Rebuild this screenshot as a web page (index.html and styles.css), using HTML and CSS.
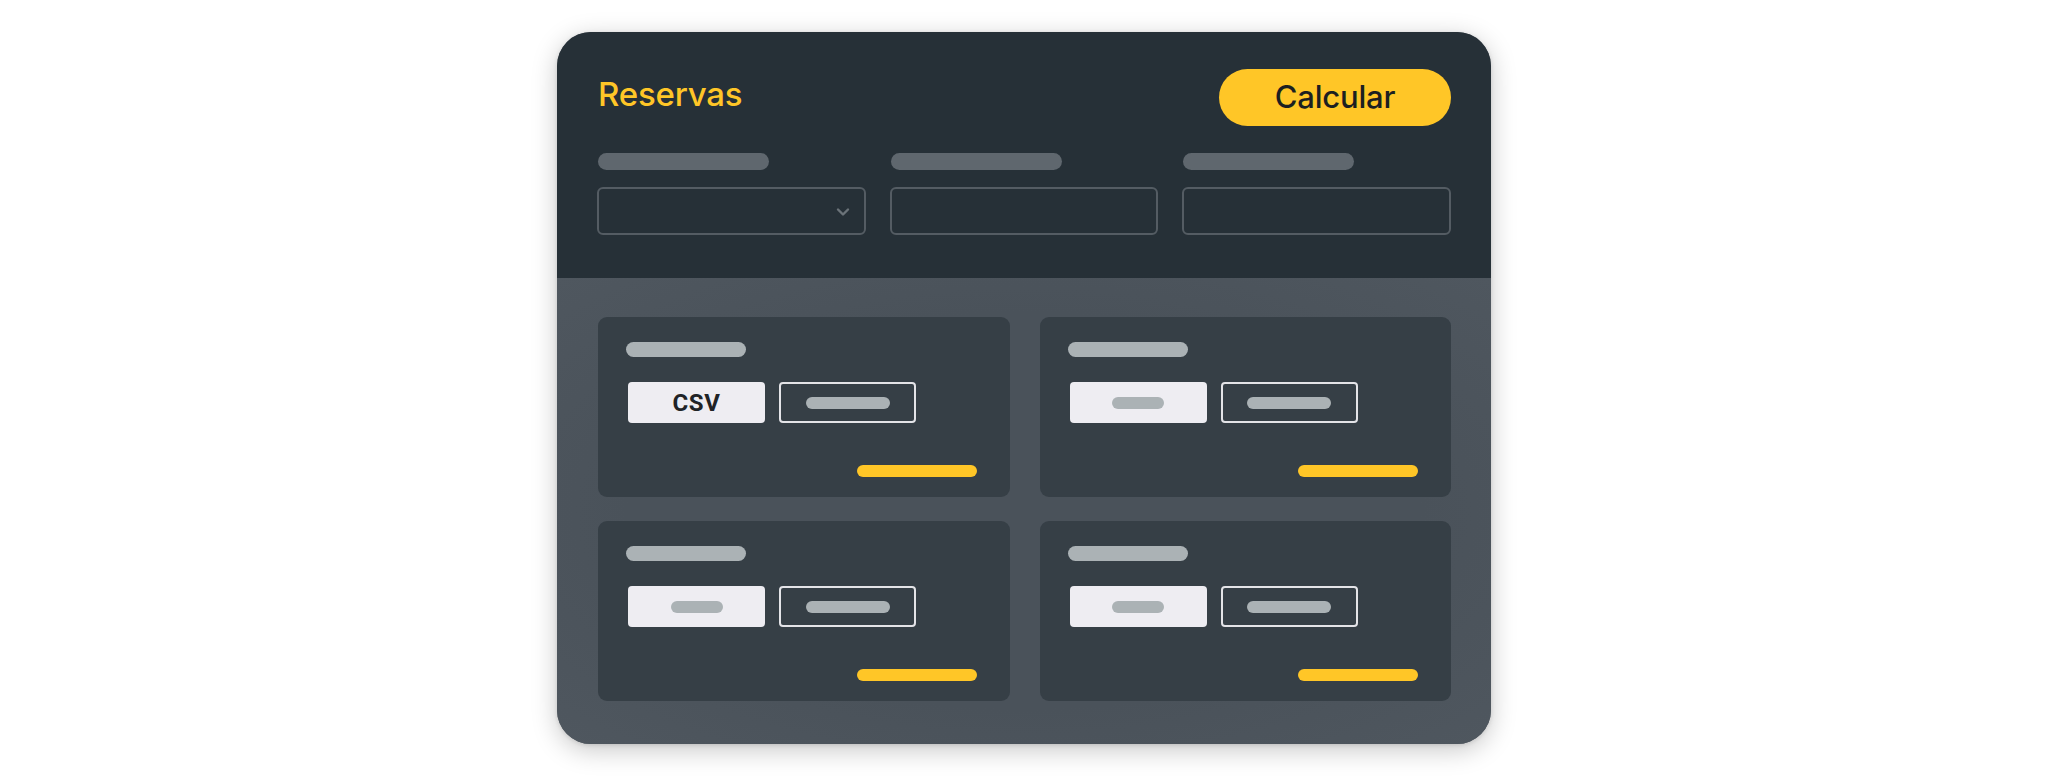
FILE: index.html
```html
<!DOCTYPE html>
<html lang="es">
<head>
<meta charset="utf-8">
<title>Reservas</title>
<link rel="stylesheet" href="styles.css">
</head>
<body>
<main class="stage">
  <section class="panel">
    <header class="panel-head">
      <div class="head-row">
        <h1 class="title">Reservas</h1>
        <button class="btn-calc" type="button">Calcular</button>
      </div>
      <div class="fields">
        <div class="field">
          <span class="label-pill"></span>
          <div class="input select">
            <svg class="chev" width="14" height="10" viewBox="0 0 14 10"><path d="M2 2.5 L7 7.5 L12 2.5" fill="none" stroke="#6b7379" stroke-width="2.4" stroke-linecap="round" stroke-linejoin="round"/></svg>
          </div>
        </div>
        <div class="field">
          <span class="label-pill"></span>
          <div class="input"></div>
        </div>
        <div class="field">
          <span class="label-pill"></span>
          <div class="input"></div>
        </div>
      </div>
    </header>
    <div class="panel-body">
      <div class="tile">
        <span class="tile-title"></span>
        <div class="tile-actions">
          <div class="btn-light"><span class="csv">CSV</span></div>
          <div class="btn-outline"><span class="pill-wide"></span></div>
        </div>
        <span class="tile-bar"></span>
      </div>
      <div class="tile">
        <span class="tile-title"></span>
        <div class="tile-actions">
          <div class="btn-light"><span class="pill-short"></span></div>
          <div class="btn-outline"><span class="pill-wide"></span></div>
        </div>
        <span class="tile-bar"></span>
      </div>
      <div class="tile">
        <span class="tile-title"></span>
        <div class="tile-actions">
          <div class="btn-light"><span class="pill-short"></span></div>
          <div class="btn-outline"><span class="pill-wide"></span></div>
        </div>
        <span class="tile-bar"></span>
      </div>
      <div class="tile">
        <span class="tile-title"></span>
        <div class="tile-actions">
          <div class="btn-light"><span class="pill-short"></span></div>
          <div class="btn-outline"><span class="pill-wide"></span></div>
        </div>
        <span class="tile-bar"></span>
      </div>
    </div>
  </section>
</main>
</body>
</html>
```
FILE: styles.css
```css
* { box-sizing: border-box; }
html, body { margin: 0; padding: 0; background: #ffffff; }
body { font-family: Inter, "Open Sans", "Liberation Sans", sans-serif; }

.stage {
  width: 2048px;
  height: 776px;
  display: flex;
  align-items: center;
  justify-content: center;
}

.panel {
  width: 934px;
  height: 712px;
  border-radius: 34px;
  overflow: hidden;
  background: #4b535b;
  box-shadow: 0 6px 26px rgba(0, 0, 0, 0.22), 0 1px 4px rgba(0, 0, 0, 0.12);
  display: flex;
  flex-direction: column;
}

.panel-head {
  background: #263037;
  height: 246px;
  padding: 37px 40px 0 40px;
}

.head-row {
  display: flex;
  justify-content: space-between;
  align-items: center;
  height: 57px;
}

.title {
  margin: 0 0 8px 1px;
  font-family: Inter, sans-serif;
  font-weight: 500;
  font-size: 33px;
  line-height: 40px;
  color: #ffc627;
  letter-spacing: -0.2px;
}

.btn-calc {
  width: 232px;
  height: 57px;
  border: none;
  border-radius: 29px;
  background: #ffc627;
  color: #1c1f21;
  font-family: Inter, sans-serif;
  font-weight: 500;
  font-size: 31px;
  letter-spacing: -0.2px;
  padding: 0 0 2px 0;
}

.fields {
  margin-top: 27px;
  display: grid;
  grid-template-columns: repeat(3, 1fr);
  column-gap: 24px;
}

.field { display: flex; flex-direction: column; }

.label-pill {
  display: block;
  width: 171px;
  height: 17px;
  border-radius: 9px;
  background: #5f676e;
  margin-left: 1px;
}

.input {
  margin-top: 17px;
  height: 48px;
  border: 2px solid #545c63;
  border-radius: 6px;
  display: flex;
  align-items: center;
  justify-content: flex-end;
  padding-right: 14px;
}

.chev { display: block; margin-top: 2px; }

.panel-body {
  flex: 1;
  padding: 39px 40px 43px 41px;
  display: grid;
  grid-template-columns: 1fr 1fr;
  grid-template-rows: 180px 180px;
  column-gap: 30px;
  row-gap: 24px;
  background: radial-gradient(ellipse at center, #4a525a 60%, #4f575f 100%);
}

.tile {
  background: #363f46;
  border-radius: 9px;
  padding: 25px 33px 20px 28px;
  display: flex;
  flex-direction: column;
}

.tile-title {
  display: block;
  width: 120px;
  height: 15px;
  border-radius: 8px;
  background: #abb2b5;
}

.tile-actions {
  margin-top: 25px;
  display: flex;
  gap: 14px;
  padding-left: 2px;
}

.btn-light {
  width: 137px;
  height: 41px;
  border-radius: 4px;
  background: #eeedf2;
  display: flex;
  align-items: center;
  justify-content: center;
}

.csv {
  font-family: Roboto, "Liberation Sans", sans-serif;
  font-weight: 700;
  font-size: 24px;
  letter-spacing: 0.6px;
  color: #202326;
  line-height: 1;
}

.btn-outline {
  width: 137px;
  height: 41px;
  border-radius: 4px;
  border: 2px solid #e4e4e8;
  display: flex;
  align-items: center;
  justify-content: center;
}

.pill-wide {
  display: block;
  width: 84px;
  height: 12px;
  border-radius: 6px;
  background: #abb2b5;
}

.pill-short {
  display: block;
  width: 52px;
  height: 12px;
  border-radius: 6px;
  background: #abb2b5;
}

.tile-bar {
  display: block;
  margin-top: auto;
  align-self: flex-end;
  width: 120px;
  height: 12px;
  border-radius: 6px;
  background: #ffc627;
}
```
